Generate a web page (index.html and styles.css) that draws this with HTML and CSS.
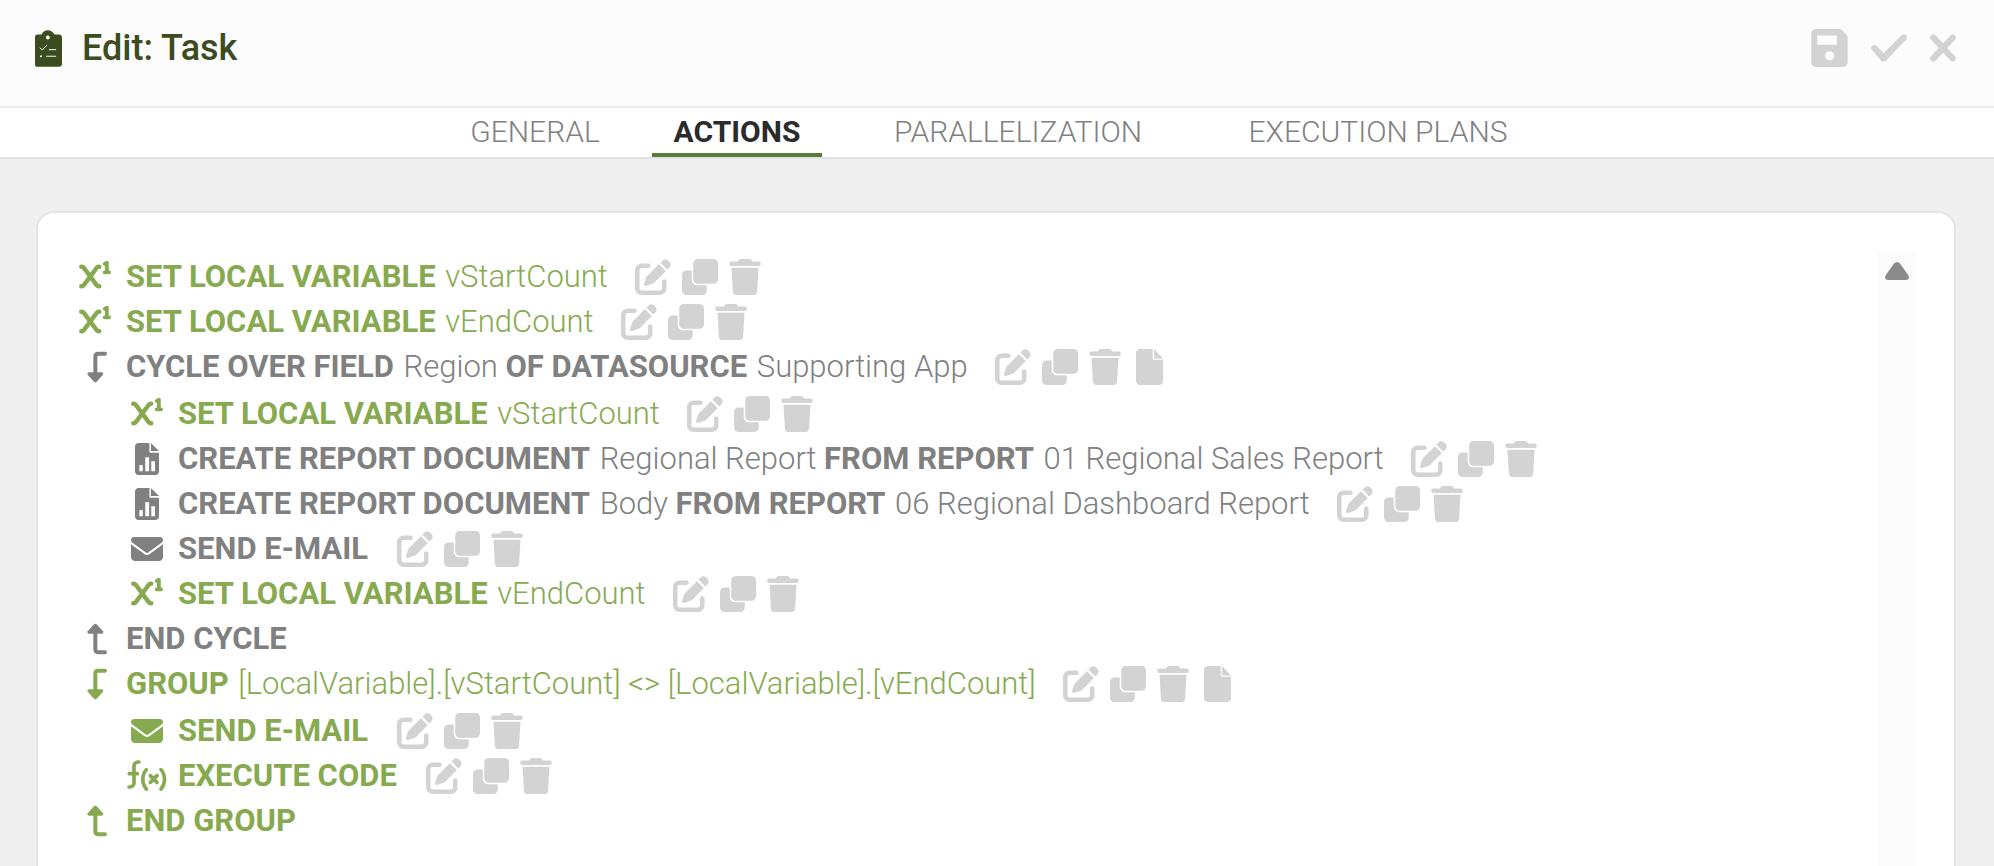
FILE: index.html
```html
<!DOCTYPE html>
<html lang="en">
<head>
<meta charset="utf-8">
<title>Edit: Task</title>
<link rel="stylesheet" href="styles.css">
</head>
<body>
<svg class="sprite" aria-hidden="true">
  <symbol id="i-power" viewBox="0 0 512 512"><g fill="none" stroke="currentColor" stroke-width="70" stroke-linecap="round" stroke-linejoin="round"><path d="M36 92h10c11 0 21 5 28 14l212 284c7 9 17 14 28 14h10"/><path d="M324 92h-10c-11 0-21 5-28 14L74 390c-7 9-17 14-28 14H36"/><path stroke-width="60" d="M412 46l34-18v148M410 180h72"/></g></symbol>
  <symbol id="i-down" viewBox="0 0 96 96"><path fill="none" stroke="currentColor" stroke-width="12" stroke-linecap="round" d="M78 8H58q-9 0-9 9v50"/><path fill="currentColor" d="M29 64h40q6 2 3 7L53 92q-4 4-8 0L26 71q-3-5 3-7z"/></symbol>
  <symbol id="i-up" viewBox="0 0 96 96"><path fill="none" stroke="currentColor" stroke-width="12" stroke-linecap="round" d="M78 88H58q-9 0-9-9V29"/><path fill="currentColor" d="M29 32h40q6-2 3-7L53 4q-4-4-8 0L26 25q-3 5 3 7z"/></symbol>
  <symbol id="i-report" viewBox="0 0 384 512"><path fill="currentColor" fill-rule="evenodd" d="M56 0C25 0 0 25 0 56V456c0 31 25 56 56 56H328c31 0 56-25 56-56V156H254c-15 0-24-9-24-24V0zM254 0V128H384zM70 352h54v100H70zM164 226h62v226h-62zM260 290h60v162h-60z"/></symbol>
  <symbol id="i-mail" viewBox="0 0 512 512"><path fill="currentColor" d="M48 64h416c26.500 0 48 21.500 48 48 0 15-7 29-19 38L275 312c-11 8-27 8-38 0L19 150C7 141 0 127 0 112 0 85.500 21.500 64 48 64zM0 178v206c0 35 29 64 64 64h384c35 0 64-29 64-64V178L294 340c-23 17-53 17-76 0z"/></symbol>
  <symbol id="i-func" viewBox="0 0 120 96"><g fill="none" stroke="currentColor" stroke-width="11" stroke-linecap="round"><path d="M36 6h-3a12 12 0 0 0-12 12v51a12 12 0 0 1-12 12H6M7 41h24"/><path d="M58 29c-14 16-14 42 0 58M102 29c14 16 14 42 0 58M70 47l20 20M90 47L70 67"/></g></symbol>
  <symbol id="i-edit" viewBox="0 0 512 512"><path fill="currentColor" d="M471.600 21.700c-21.900-21.900-57.300-21.900-79.200 0L362.300 51.700l97.900 97.900 30.100-30.100c21.900-21.900 21.900-57.300 0-79.200L471.600 21.700zm-299.200 220c-6.100 6.100-10.800 13.600-13.500 21.900l-29.600 88.800c-2.900 8.600-.6 18.100 5.800 24.600s15.900 8.700 24.600 5.800l88.800-29.600c8.200-2.700 15.700-7.400 21.900-13.500L437.700 172.300 339.700 74.300 172.400 241.700zM96 64C43 64 0 107 0 160V416c0 53 43 96 96 96H352c53 0 96-43 96-96V320c0-17.700-14.300-32-32-32s-32 14.300-32 32v96c0 17.700-14.300 32-32 32H96c-17.700 0-32-14.300-32-32V160c0-17.700 14.300-32 32-32h96c17.700 0 32-14.300 32-32s-14.300-32-32-32H96z"/></symbol>
  <symbol id="i-copy" viewBox="0 0 512 512"><rect fill="currentColor" x="160" width="352" height="352" rx="64"/><path fill="currentColor" d="M64 162h74v128c0 47 37 84 84 84h130v74a64 64 0 0 1-64 64H64a64 64 0 0 1-64-64V226a64 64 0 0 1 64-64z"/></symbol>
  <symbol id="i-trash" viewBox="0 0 448 512"><path fill="currentColor" d="M30 36h94l10-18q10-18 30-18h120q20 0 30 18l10 18h94a30 30 0 0 1 0 62H30a30 30 0 0 1 0-62zM32 124h384l-20 340c-2 27-22 48-49 48H101c-27 0-47-21-49-48z"/></symbol>
  <symbol id="i-file" viewBox="0 0 384 512"><path fill="currentColor" d="M60 0C27 0 0 27 0 60V452c0 33 27 60 60 60H324c33 0 60-27 60-60V154H262c-15 0-24-9-24-24V0zM258 0V134H384z"/></symbol>
</svg>

<header class="header">
  <svg class="header-icon" viewBox="0 0 82 111" aria-hidden="true"><path fill="currentColor" fill-rule="evenodd" d="M8 13h12C23 5 30 0 39 0s16 5 20 13h14q9 1 9 10v78q0 10-10 10H8q-8 0-8-8V21q0-8 8-8zM39 16a6 6 0 1 0 0 12 6 6 0 0 0 0-12z"/><g fill="none" stroke="#fcfcfc" stroke-width="3" stroke-linecap="round"><path d="M16 54l6 6 14-14M43 59h20M35 79h28"/></g><circle cx="18" cy="79" r="3" fill="#fcfcfc"/></svg>
  <h1 class="title">Edit: Task</h1>
  <div class="header-tools">
    <button class="tool" type="button" aria-label="Save"><svg class="tool-save" viewBox="0 0 111 116"><path fill="currentColor" fill-rule="evenodd" d="M15 0h71q5 0 8 3l14 15q3 3 3 8v74q0 16-16 16H15q-15 0-15-16V16Q0 0 15 0zM18 20v28h60V20zM56 68a14 14 0 1 0 0 28 14 14 0 0 0 0-28z"/></svg></button>
    <button class="tool" type="button" aria-label="Apply"><svg class="tool-check" viewBox="0 0 108 84"><path fill="currentColor" d="M3 48q-6-6 0-12 7-6 14 0l21 22L92 3q6-5 13 0 5 7 0 14L44 81q-6 5-13 0z"/></svg></button>
    <button class="tool" type="button" aria-label="Close"><svg class="tool-close" viewBox="0 0 78 84"><path fill="none" stroke="currentColor" stroke-width="19" stroke-linecap="round" d="M10 11l58 62M68 11L10 73"/></svg></button>
  </div>
</header>

<nav class="tabs" role="tablist">
  <button class="tab" type="button" role="tab">GENERAL</button>
  <button class="tab tab-active" type="button" role="tab" aria-selected="true">ACTIONS</button>
  <button class="tab tab-wide" type="button" role="tab">PARALLELIZATION</button>
  <button class="tab tab-wide" type="button" role="tab">EXECUTION PLANS</button>
</nav>

<main class="main">
  <section class="card">
    <ul class="steps">
      <li class="step step-green"><span class="step-icon"><svg class="glyph"><use href="#i-power"/></svg></span><span><b>SET LOCAL VARIABLE</b> vStartCount</span><span class="ops"><button class="op" type="button" aria-label="Edit"><svg class="op-36"><use href="#i-edit"/></svg></button><button class="op" type="button" aria-label="Copy"><svg class="op-36"><use href="#i-copy"/></svg></button><button class="op" type="button" aria-label="Delete"><svg class="op-32"><use href="#i-trash"/></svg></button></span></li>
      <li class="step step-green"><span class="step-icon"><svg class="glyph"><use href="#i-power"/></svg></span><span><b>SET LOCAL VARIABLE</b> vEndCount</span><span class="ops"><button class="op" type="button" aria-label="Edit"><svg class="op-36"><use href="#i-edit"/></svg></button><button class="op" type="button" aria-label="Copy"><svg class="op-36"><use href="#i-copy"/></svg></button><button class="op" type="button" aria-label="Delete"><svg class="op-32"><use href="#i-trash"/></svg></button></span></li>
      <li class="step"><span class="step-icon"><svg class="glyph"><use href="#i-down"/></svg></span><span><b>CYCLE OVER FIELD</b> Region <b>OF DATASOURCE</b> Supporting App</span><span class="ops"><button class="op" type="button" aria-label="Edit"><svg class="op-36"><use href="#i-edit"/></svg></button><button class="op" type="button" aria-label="Copy"><svg class="op-36"><use href="#i-copy"/></svg></button><button class="op" type="button" aria-label="Delete"><svg class="op-32"><use href="#i-trash"/></svg></button><button class="op" type="button" aria-label="Add step"><svg class="op-27"><use href="#i-file"/></svg></button></span></li>
      <li>
        <ul class="steps steps-nested">
          <li class="step step-green"><span class="step-icon"><svg class="glyph"><use href="#i-power"/></svg></span><span><b>SET LOCAL VARIABLE</b> vStartCount</span><span class="ops"><button class="op" type="button" aria-label="Edit"><svg class="op-36"><use href="#i-edit"/></svg></button><button class="op" type="button" aria-label="Copy"><svg class="op-36"><use href="#i-copy"/></svg></button><button class="op" type="button" aria-label="Delete"><svg class="op-32"><use href="#i-trash"/></svg></button></span></li>
          <li class="step"><span class="step-icon"><svg class="glyph"><use href="#i-report"/></svg></span><span><b>CREATE REPORT DOCUMENT</b> Regional Report <b>FROM REPORT</b> 01 Regional Sales Report</span><span class="ops"><button class="op" type="button" aria-label="Edit"><svg class="op-36"><use href="#i-edit"/></svg></button><button class="op" type="button" aria-label="Copy"><svg class="op-36"><use href="#i-copy"/></svg></button><button class="op" type="button" aria-label="Delete"><svg class="op-32"><use href="#i-trash"/></svg></button></span></li>
          <li class="step"><span class="step-icon"><svg class="glyph"><use href="#i-report"/></svg></span><span><b>CREATE REPORT DOCUMENT</b> Body <b>FROM REPORT</b> 06 Regional Dashboard Report</span><span class="ops"><button class="op" type="button" aria-label="Edit"><svg class="op-36"><use href="#i-edit"/></svg></button><button class="op" type="button" aria-label="Copy"><svg class="op-36"><use href="#i-copy"/></svg></button><button class="op" type="button" aria-label="Delete"><svg class="op-32"><use href="#i-trash"/></svg></button></span></li>
          <li class="step"><span class="step-icon"><svg class="glyph"><use href="#i-mail"/></svg></span><span><b>SEND E-MAIL</b></span><span class="ops"><button class="op" type="button" aria-label="Edit"><svg class="op-36"><use href="#i-edit"/></svg></button><button class="op" type="button" aria-label="Copy"><svg class="op-36"><use href="#i-copy"/></svg></button><button class="op" type="button" aria-label="Delete"><svg class="op-32"><use href="#i-trash"/></svg></button></span></li>
          <li class="step step-green"><span class="step-icon"><svg class="glyph"><use href="#i-power"/></svg></span><span><b>SET LOCAL VARIABLE</b> vEndCount</span><span class="ops"><button class="op" type="button" aria-label="Edit"><svg class="op-36"><use href="#i-edit"/></svg></button><button class="op" type="button" aria-label="Copy"><svg class="op-36"><use href="#i-copy"/></svg></button><button class="op" type="button" aria-label="Delete"><svg class="op-32"><use href="#i-trash"/></svg></button></span></li>
        </ul>
      </li>
      <li class="step"><span class="step-icon"><svg class="glyph"><use href="#i-up"/></svg></span><span><b>END CYCLE</b></span></li>
      <li class="step step-green"><span class="step-icon"><svg class="glyph"><use href="#i-down"/></svg></span><span><b>GROUP</b> [LocalVariable].[vStartCount] &lt;&gt; [LocalVariable].[vEndCount]</span><span class="ops"><button class="op" type="button" aria-label="Edit"><svg class="op-36"><use href="#i-edit"/></svg></button><button class="op" type="button" aria-label="Copy"><svg class="op-36"><use href="#i-copy"/></svg></button><button class="op" type="button" aria-label="Delete"><svg class="op-32"><use href="#i-trash"/></svg></button><button class="op" type="button" aria-label="Add step"><svg class="op-27"><use href="#i-file"/></svg></button></span></li>
      <li>
        <ul class="steps steps-nested">
          <li class="step step-green"><span class="step-icon"><svg class="glyph"><use href="#i-mail"/></svg></span><span><b>SEND E-MAIL</b></span><span class="ops"><button class="op" type="button" aria-label="Edit"><svg class="op-36"><use href="#i-edit"/></svg></button><button class="op" type="button" aria-label="Copy"><svg class="op-36"><use href="#i-copy"/></svg></button><button class="op" type="button" aria-label="Delete"><svg class="op-32"><use href="#i-trash"/></svg></button></span></li>
          <li class="step step-green"><span class="step-icon"><svg class="glyph glyph-wide"><use href="#i-func"/></svg></span><span><b>EXECUTE CODE</b></span><span class="ops"><button class="op" type="button" aria-label="Edit"><svg class="op-36"><use href="#i-edit"/></svg></button><button class="op" type="button" aria-label="Copy"><svg class="op-36"><use href="#i-copy"/></svg></button><button class="op" type="button" aria-label="Delete"><svg class="op-32"><use href="#i-trash"/></svg></button></span></li>
        </ul>
      </li>
      <li class="step step-green"><span class="step-icon"><svg class="glyph"><use href="#i-up"/></svg></span><span><b>END GROUP</b></span></li>
    </ul>
    <div class="scrollbar">
      <button class="scroll-up" type="button" aria-label="Scroll up"><svg class="scroll-arrow" viewBox="0 0 24 18"><path fill="currentColor" d="M9 1.500q3-3 6 0l8.500 12q1.500 4.500-3 4.500h-17q-4.500 0-3-4.500z"/></svg></button>
    </div>
  </section>
</main>
</body>
</html>
```
FILE: styles.css
```css
* { box-sizing: border-box; }

body {
  margin: 0;
  height: 100vh;
  display: flex;
  flex-direction: column;
  overflow: hidden;
  background: #efefef;
  color: #808080;
  font-family: Roboto, "Liberation Sans", sans-serif;
  font-size: 31px;
  font-weight: 300;
}

button {
  border: 0;
  padding: 0;
  background: none;
  color: inherit;
  font: inherit;
  cursor: pointer;
}

svg { display: block; }

.sprite { position: absolute; width: 0; height: 0; }

.header {
  display: flex;
  align-items: center;
  padding: 29px 38px 39px 35px;
  background: #fcfcfc;
  border-bottom: 2px solid #e9ecef;
}

.header-icon { width: 27px; height: 37px; color: #3b4d20; }

.title {
  margin: 0 0 0 20px;
  color: #3b4d20;
  font-size: 36px;
  font-weight: 500;
  line-height: 38px;
}

.header-tools {
  display: flex;
  align-items: center;
  gap: 23px;
  margin-left: auto;
  color: #d3d3d3;
}

.tool-save { width: 37px; height: 38px; }
.tool-check { width: 36px; height: 28px; }
.tool-close { width: 26px; height: 28px; }

.tabs {
  display: flex;
  justify-content: center;
  gap: 32px;
  padding-right: 2px;
  background: #fff;
  border-bottom: 2px solid #dee2e6;
}

.tab {
  min-width: 170px;
  height: 49px;
  padding-top: 3px;
  border-bottom: 4px solid transparent;
  font-size: 30px;
  line-height: 42px;
}

.tab-wide { min-width: 328px; }

.tab-active {
  border-bottom-color: #5c7a35;
  color: #2b2b2b;
  font-weight: 700;
}

.main {
  flex: 1;
  display: flex;
  min-height: 0;
  padding: 52px 38px 0 36px;
}

.card {
  flex: 1;
  display: flex;
  padding: 38px 38px 0;
  background: #fff;
  border: 2px solid #e5e5e5;
  border-bottom: 0;
  border-radius: 18px 18px 0 0;
}

.steps {
  flex: 1;
  margin: 0;
  padding: 3px 0 0;
  list-style: none;
}

.steps-nested { padding: 2px 0 0 52px; }

.step {
  display: flex;
  align-items: center;
  height: 45px;
  line-height: 45px;
  white-space: nowrap;
}

.step-green { color: #87aa50; }

.step b { margin-right: 2px; font-weight: 700; }

.step-icon {
  display: flex;
  justify-content: center;
  width: 38px;
  margin-right: 12px;
}

.glyph { flex: none; width: 32px; height: 32px; }
.glyph-wide { width: 40px; }

.ops {
  display: flex;
  gap: 11px;
  margin-left: 27px;
  color: #d3d3d3;
}

.op { width: 36px; height: 36px; }

.op-36 { width: 36px; height: 36px; }
.op-32 { width: 32px; height: 36px; }
.op-27 { width: 27px; height: 36px; }

.scrollbar {
  width: 38px;
  padding-top: 11px;
  background: #fbfbfb;
}

.scroll-up { display: block; margin: 0 auto; color: #8b8b8b; }

.scroll-arrow { width: 24px; height: 18px; }
```
